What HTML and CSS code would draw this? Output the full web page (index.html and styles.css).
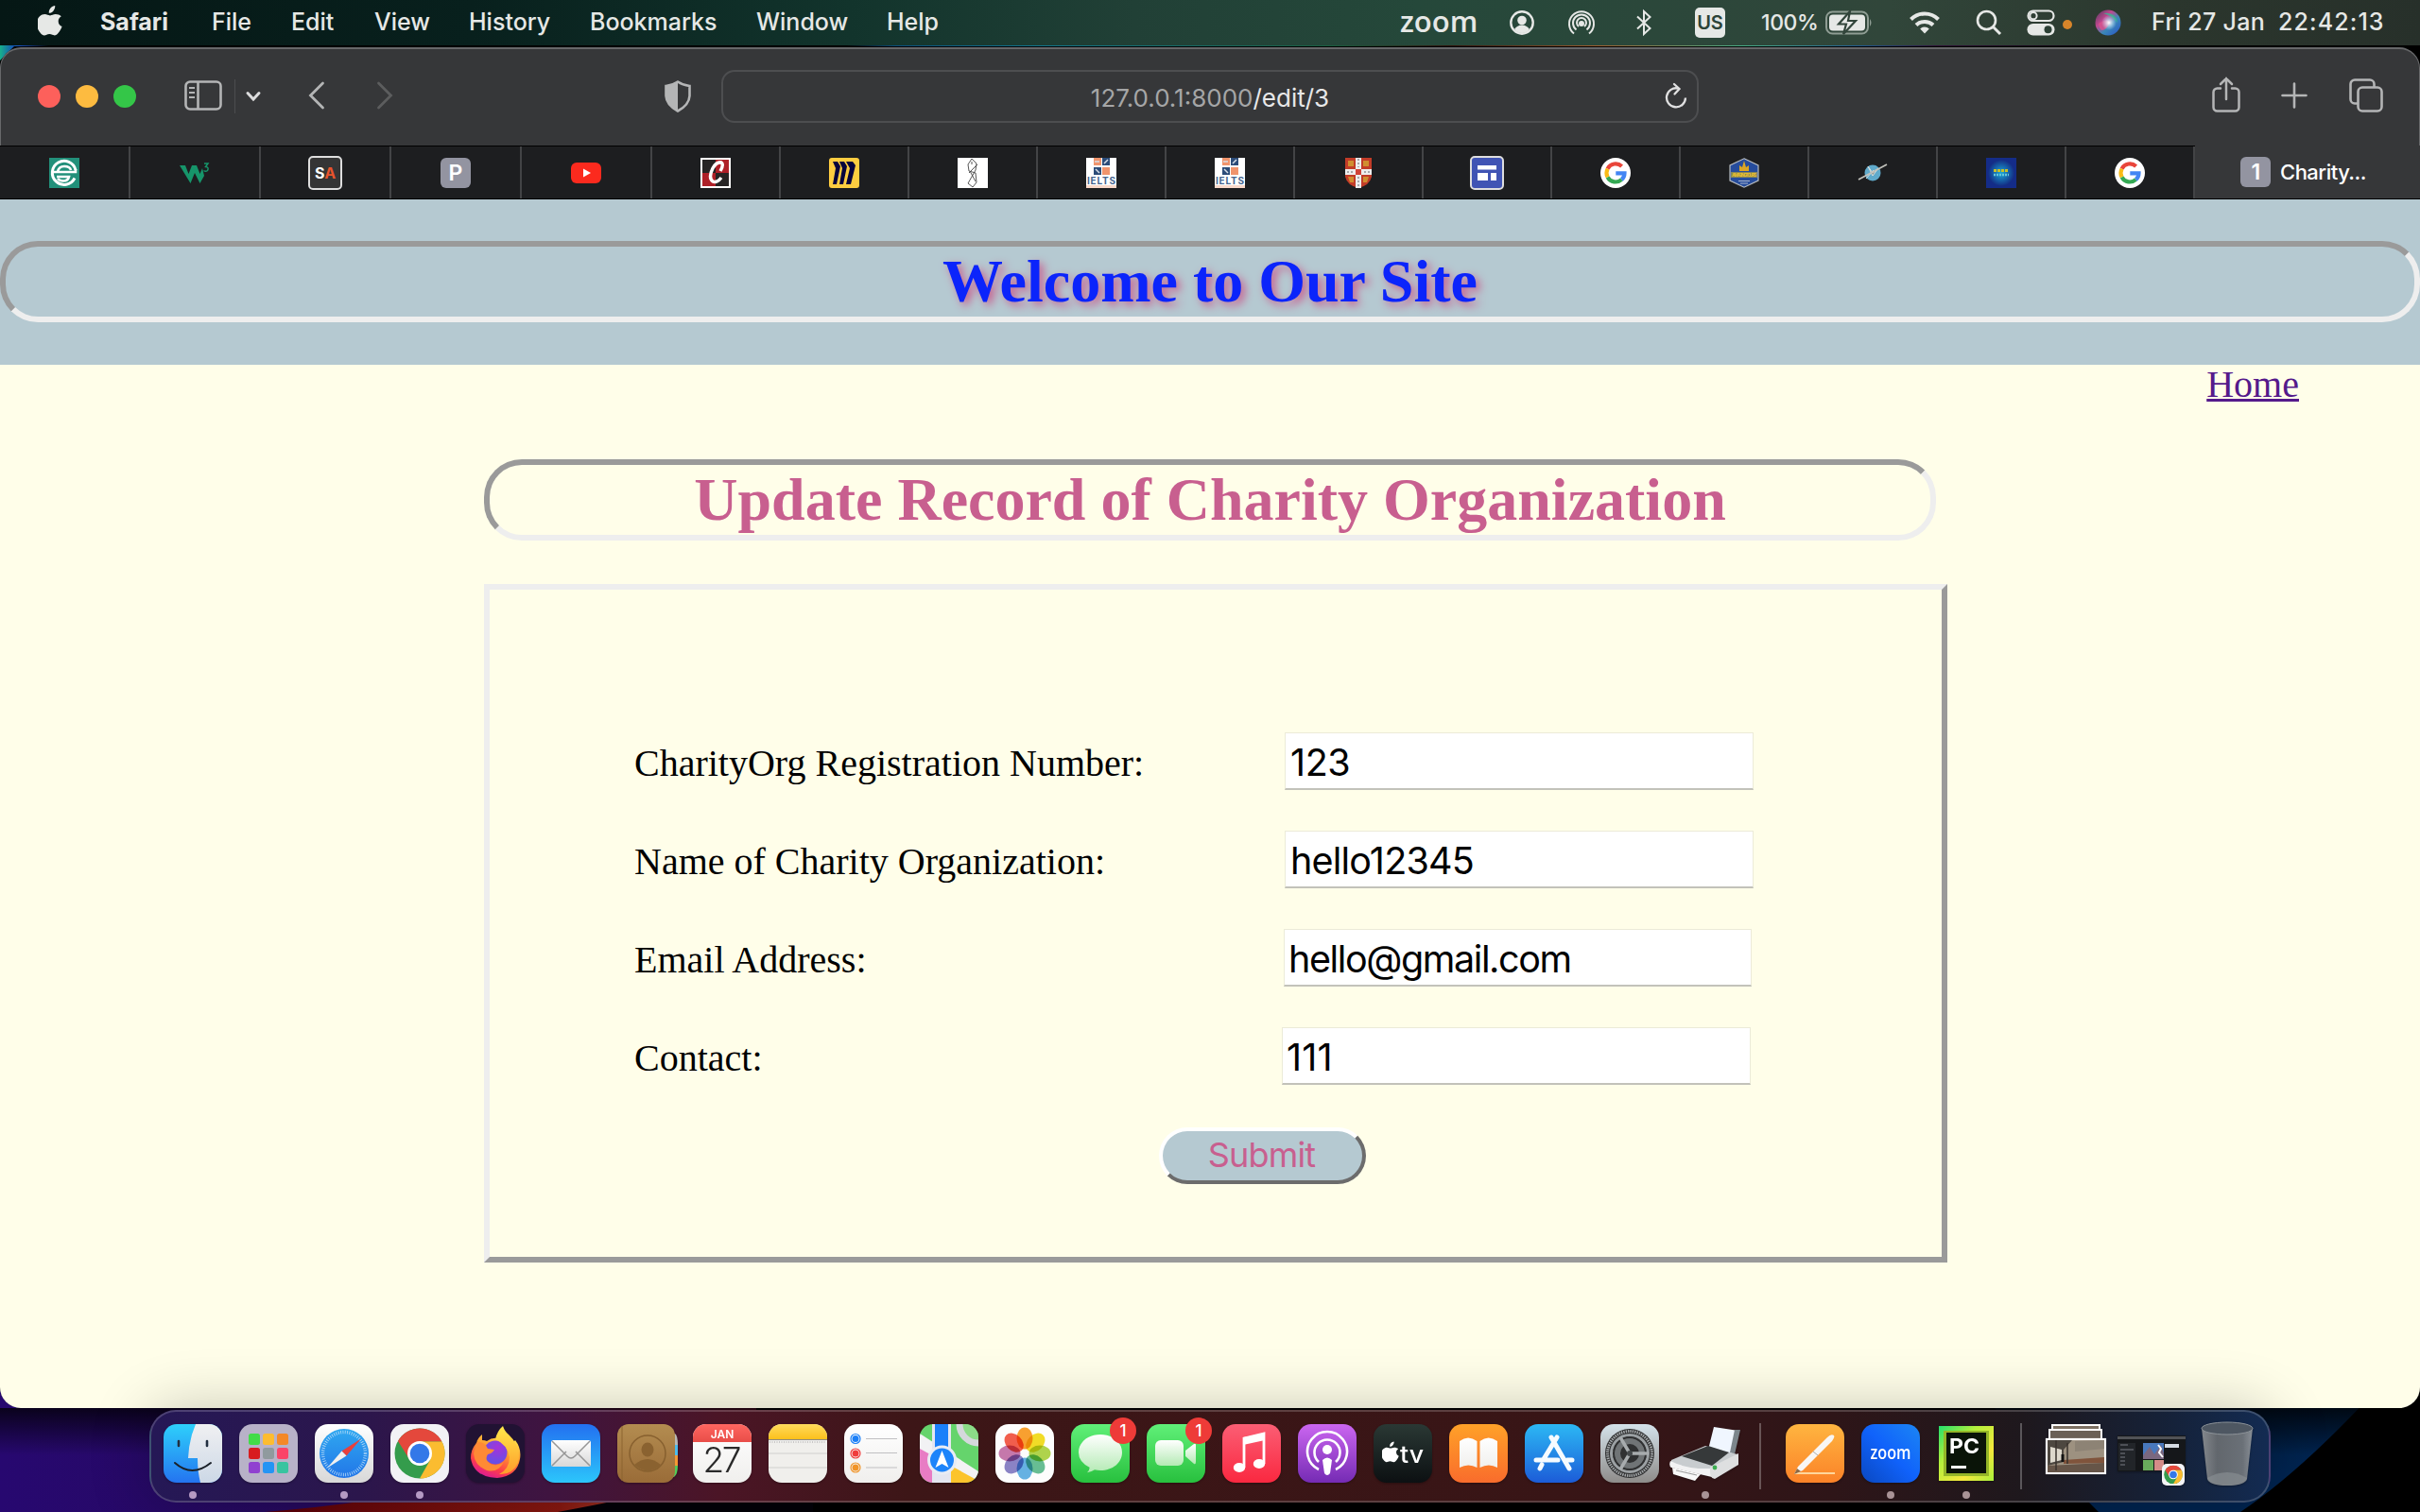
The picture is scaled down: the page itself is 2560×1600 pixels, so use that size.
FILE: index.html
```html
<!DOCTYPE html>
<html lang="en">
<head>
<meta charset="utf-8">
<title>Charity</title>
<link rel="stylesheet" href="styles.css">
</head>
<body>
<svg class="defs" width="0" height="0" aria-hidden="true">
  <defs>
    <linearGradient id="gFinder" x1="0" y1="0" x2="0" y2="1"><stop offset="0" stop-color="#2ed0fb"/><stop offset="1" stop-color="#2474f0"/></linearGradient>
    <linearGradient id="gFace" x1="0" y1="0" x2="0" y2="1"><stop offset="0" stop-color="#f0f0f2"/><stop offset="1" stop-color="#ccd8e6"/></linearGradient>
    <linearGradient id="gWhite" x1="0" y1="0" x2="0" y2="1"><stop offset="0" stop-color="#fff"/><stop offset="1" stop-color="#d8d8d8"/></linearGradient>
    <linearGradient id="gPaper" x1="0" y1="0" x2="0" y2="1"><stop offset="0" stop-color="#fff"/><stop offset="1" stop-color="#f0efed"/></linearGradient>
    <linearGradient id="gBlue" x1="0" y1="0" x2="0" y2="1"><stop offset="0" stop-color="#2fa8f0"/><stop offset="1" stop-color="#2276e8"/></linearGradient>
    <linearGradient id="gMail" x1="0" y1="0" x2="0" y2="1"><stop offset="0" stop-color="#2370f0"/><stop offset="1" stop-color="#2cc6fb"/></linearGradient>
    <linearGradient id="gFox" x1=".8" y1="0" x2=".3" y2="1"><stop offset="0" stop-color="#fff04f"/><stop offset=".4" stop-color="#ff9a2e"/><stop offset=".75" stop-color="#ff3d49"/><stop offset="1" stop-color="#d9189a"/></linearGradient>
    <linearGradient id="gFoxTail" x1="0" y1="0" x2="0" y2="1"><stop offset="0" stop-color="#ffe94a"/><stop offset="1" stop-color="#ff9c2b"/></linearGradient>
    <radialGradient id="gGlobe" cx=".6" cy=".3" r=".8"><stop offset="0" stop-color="#a533d8"/><stop offset="1" stop-color="#5a55e8"/></radialGradient>
    <linearGradient id="gBook" x1="0" y1="0" x2="0" y2="1"><stop offset="0" stop-color="#b38c50"/><stop offset="1" stop-color="#9a6c38"/></linearGradient>
    <linearGradient id="gRed" x1="0" y1="0" x2="0" y2="1"><stop offset="0" stop-color="#ff6660"/><stop offset="1" stop-color="#e84d48"/></linearGradient>
    <linearGradient id="gYellow" x1="0" y1="0" x2="0" y2="1"><stop offset="0" stop-color="#ffdb5c"/><stop offset="1" stop-color="#fcc01c"/></linearGradient>
    <linearGradient id="gGreen" x1="0" y1="0" x2="0" y2="1"><stop offset="0" stop-color="#60f078"/><stop offset="1" stop-color="#28c03e"/></linearGradient>
    <linearGradient id="gBubble" x1="0" y1="0" x2="0" y2="1"><stop offset="0" stop-color="#fff"/><stop offset="1" stop-color="#b4eab4"/></linearGradient>
    <linearGradient id="gMusic" x1="0" y1="0" x2="0" y2="1"><stop offset="0" stop-color="#fb5e74"/><stop offset="1" stop-color="#fa2840"/></linearGradient>
    <linearGradient id="gPod" x1="0" y1="0" x2="0" y2="1"><stop offset="0" stop-color="#cb66f0"/><stop offset="1" stop-color="#752bb4"/></linearGradient>
    <linearGradient id="gTv" x1="0" y1="0" x2="0" y2="1"><stop offset="0" stop-color="#2a3834"/><stop offset="1" stop-color="#0c1012"/></linearGradient>
    <linearGradient id="gOrange" x1="0" y1="0" x2="0" y2="1"><stop offset="0" stop-color="#ffa128"/><stop offset="1" stop-color="#f96c2c"/></linearGradient>
    <linearGradient id="gStore" x1="0" y1="0" x2="0" y2="1"><stop offset="0" stop-color="#2cb8f4"/><stop offset="1" stop-color="#1c5cd8"/></linearGradient>
    <linearGradient id="gPrefs" x1="0" y1="0" x2="0" y2="1"><stop offset="0" stop-color="#d4e2ea"/><stop offset="1" stop-color="#8e8c8a"/></linearGradient>
    <linearGradient id="gPages" x1="0" y1="0" x2="0" y2="1"><stop offset="0" stop-color="#ffb540"/><stop offset="1" stop-color="#fb8228"/></linearGradient>
    <linearGradient id="gZoom" x1="1" y1="0" x2="0" y2="1"><stop offset="0" stop-color="#1c86f4"/><stop offset=".5" stop-color="#1062fb"/><stop offset="1" stop-color="#0a48c0"/></linearGradient>
    <linearGradient id="gPc" x1="0" y1="0" x2="1" y2="1"><stop offset="0" stop-color="#22e06c"/><stop offset=".35" stop-color="#b4f03c"/><stop offset=".7" stop-color="#f4e83c"/><stop offset="1" stop-color="#a8f03c"/></linearGradient>
    <linearGradient id="gTrash" x1="0" y1="0" x2="1" y2="0"><stop offset="0" stop-color="#84888d"/><stop offset=".3" stop-color="#62676d"/><stop offset=".8" stop-color="#6a7077"/><stop offset="1" stop-color="#898f96"/></linearGradient>
    <radialGradient id="gSea"><stop offset="0" stop-color="#18a8d8"/><stop offset="1" stop-color="#142c84"/></radialGradient>
    <linearGradient id="gSiri" x1="0" y1="0" x2="1" y2="1"><stop offset="0" stop-color="#4a3a58"/><stop offset=".35" stop-color="#c04890"/><stop offset=".6" stop-color="#3a88b8"/><stop offset="1" stop-color="#2850c8"/></linearGradient>
    <radialGradient id="gSiriGlow"><stop offset="0" stop-color="#fff"/><stop offset="1" stop-color="#bfe4ff" stop-opacity="0"/></radialGradient>
    <clipPath id="tile"><rect width="62" height="62" rx="14"/></clipPath>
    <symbol id="apple" viewBox="0 0 26 32"><path d="M18.200 0c.3 2.100-.6 4-1.700 5.400-1.200 1.400-3 2.400-4.700 2.300-.3-2 .6-4 1.700-5.200C14.700 1.100 16.600.2 18.200 0zM24.800 11.200c-1.900 1.200-3.100 2.900-3.100 5.200 0 2.700 1.600 4.700 3.900 5.600-.5 1.700-1.400 3.500-2.500 5.100-1.500 2.200-3 4.300-5.300 4.300-2.200 0-2.900-1.300-5.500-1.300s-3.400 1.300-5.500 1.400c-2.300.1-4-2.300-5.500-4.500C-1.700 22.500-2.100 14.700 2 11.300c1.500-1.400 3.500-2.200 5.400-2.200 2.200 0 3.700 1.300 5.600 1.300 1.900 0 3.100-1.300 5.800-1.300 2.200 0 4.500.8 6 2.100z" fill="currentColor"/></symbol>
    <symbol id="google" viewBox="0 0 32 32"><circle cx="16" cy="16" r="16" fill="#fff"/><g fill="none" stroke-width="4.200"><path d="M7.600 11.600A9.500 9.500 0 0 1 22.600 9" stroke="#e9453a"/><path d="M7.600 20.400a9.500 9.500 0 0 1 0-8.800" stroke="#f9bb16"/><path d="M22.400 23A9.500 9.500 0 0 1 7.600 20.400" stroke="#34a853"/><path d="M16.300 16.300h9.200c0 2.800-1.200 5.200-3.100 6.700" stroke="#4285f4"/></g></symbol>
    <symbol id="ielts" viewBox="0 0 32 32"><rect width="32" height="32" fill="#fff"/><rect x="8" y="0" width="8" height="8" fill="#f0946c"/><rect x="17" y="0" width="8" height="8" fill="#2c4c78"/><rect x="8" y="10" width="8" height="8" fill="#2c4c78"/><rect x="17" y="10" width="8" height="8" fill="#f0946c"/><path d="M9 4h5M19 6l4-4M10 12l4 4" stroke="#d8dfe8" stroke-width="1.500"/><text x="16" y="27.500" font-size="10" font-weight="700" textLength="30" text-anchor="middle" fill="#466690">IELTS</text><rect y="29" width="32" height="3" fill="#f9d9ca"/></symbol>
    <symbol id="chrome" viewBox="0 0 54 54"><circle cx="27" cy="27" r="26.500" fill="#349c4c"/><path d="M4 14A26.500 26.500 0 0 1 50.500 14.500L27 14.500l-12 17z" fill="#e4483c"/><path d="M27 14.500h23.500A26.500 26.500 0 0 1 27 53.500l11.300-20z" fill="#fbbc30"/><circle cx="27" cy="27" r="13" fill="#fff"/><circle cx="27" cy="27" r="10.300" fill="#3478e8"/></symbol>
  </defs>
</svg>

<svg class="wallpaper" viewBox="0 0 2560 1600" preserveAspectRatio="none" aria-hidden="true">
  <defs>
    <linearGradient id="wLeft" x1="0" y1="0" x2="1" y2="0"><stop offset="0" stop-color="#270870"/><stop offset=".45" stop-color="#260a5c"/><stop offset=".72" stop-color="#701060"/><stop offset="1" stop-color="#8c1040"/></linearGradient>
    <linearGradient id="wRed" x1="0" y1="0" x2="1" y2="0"><stop offset="0" stop-color="#5a0008"/><stop offset=".6" stop-color="#8a1810"/><stop offset="1" stop-color="#c87858"/></linearGradient>
    <linearGradient id="wTop" x1="0" y1="0" x2="1" y2="0"><stop offset="0" stop-color="#18a880"/><stop offset=".008" stop-color="#1850c0"/><stop offset=".02" stop-color="#000"/><stop offset=".35" stop-color="#000"/><stop offset=".37" stop-color="#085080"/><stop offset=".43" stop-color="#107890"/><stop offset=".55" stop-color="#186040"/><stop offset=".6" stop-color="#301008"/><stop offset=".66" stop-color="#a06030"/><stop offset=".72" stop-color="#48b088"/><stop offset=".77" stop-color="#205890"/><stop offset=".8" stop-color="#301038"/><stop offset=".88" stop-color="#000"/></linearGradient>
    <linearGradient id="wCorner" x1="0" y1="0" x2="1" y2="0"><stop offset="0" stop-color="#18b08c"/><stop offset="1" stop-color="#1448b8"/></linearGradient>
    <linearGradient id="wShade" x1="0" y1="0" x2="0" y2="1"><stop offset="0" stop-color="#000" stop-opacity=".75"/><stop offset="1" stop-color="#000" stop-opacity="0"/></linearGradient>
    <radialGradient id="wBlue" cx="0" cy="0" r="1"><stop offset="0" stop-color="#001028"/><stop offset="1" stop-color="#002450"/></radialGradient>
  </defs>
  <rect width="2560" height="1600" fill="#000"/>
  <rect y="46" width="2560" height="3" fill="url(#wTop)"/>
  <path d="M0 48H16L0 64z" fill="url(#wCorner)"/>
  <path d="M0 1440H800V1600H0z" fill="url(#wLeft)"/>
  <path d="M280 1600Q440 1588 620 1540H800V1600z" fill="url(#wRed)"/>
  <path d="M590 1600Q700 1580 860 1540V1600z" fill="#030208"/>
  <path d="M2100 1480H2505Q2430 1560 2370 1600H2220z" fill="url(#wBlue)"/>
  <rect y="1490" width="2560" height="50" fill="url(#wShade)"/>
</svg>

<header class="menubar">
  <svg class="apple-mark"><use href="#apple"/></svg>
  <nav class="menus"><b>Safari</b><span>File</span><span>Edit</span><span>View</span><span>History</span><span>Bookmarks</span><span>Window</span><span>Help</span></nav>
  <div class="status">
    <span class="zoom-word">zoom</span>
    <svg class="s-user" width="26" height="26" viewBox="0 0 26 26"><circle cx="13" cy="13" r="11.700" fill="none" stroke="#e6e8e6" stroke-width="2.400"/><circle cx="13" cy="10.500" r="4.800" fill="#e6e8e6"/><path d="M5 20q3-4.500 8-4.500t8 4.500q-3 4-8 4t-8-4z" fill="#e6e8e6"/></svg>
    <svg class="s-air" width="30" height="28" viewBox="0 0 30 28" fill="none" stroke="#e6e8e6" stroke-width="2"><path d="M7 25.500A13 13 0 1 1 23 25.500M9.500 21.500A9 9 0 1 1 20.500 21.500M12 18A5 5 0 1 1 18 18"/><circle cx="15" cy="15" r="2" fill="#e6e8e6"/></svg>
    <svg class="s-bt" width="18" height="28" viewBox="0 0 18 28" fill="none" stroke="#e6e8e6" stroke-width="2"><path d="M2 7.500L15.500 20 9 26V2l6.500 6L2 20.500"/></svg>
    <span class="us">US</span>
    <span class="pct">100%</span>
    <svg class="s-batt" width="50" height="26" viewBox="0 0 50 26"><rect x="1" y="1.500" width="44" height="23" rx="6.500" fill="none" stroke="#8f9d94" stroke-width="2"/><rect x="4" y="4.500" width="38" height="17" rx="4" fill="#e6e8e6"/><path d="M47 9q3 4 0 8z" fill="#8f9d94"/><path d="M26 1L14 14.500h8L19 25 32 11h-8z" fill="#e6e8e6" stroke="#32453b" stroke-width="2.200"/></svg>
    <svg class="s-wifi" width="34" height="26" viewBox="0 0 34 26" fill="none" stroke="#e6e8e6" stroke-width="4"><path d="M2.500 9.500a20.500 20.500 0 0 1 29 0M8 15.500a13 13 0 0 1 18 0"/><path d="M17 24.500l-4.800-5a7 7 0 0 1 9.600 0z" fill="#e6e8e6" stroke="none"/></svg>
    <svg class="s-find" width="28" height="28" viewBox="0 0 28 28" fill="none" stroke="#e6e8e6" stroke-width="2.600"><circle cx="11.500" cy="11.500" r="9.500"/><path d="M18.500 18.500l7.500 7.500" stroke-width="3"/></svg>
    <svg class="s-cc" width="30" height="28" viewBox="0 0 30 28"><rect x="1.500" y="1.500" width="27" height="10.500" rx="5.200" fill="none" stroke="#e6e8e6" stroke-width="2.200"/><circle cx="7" cy="6.700" r="3.600" fill="none" stroke="#e6e8e6" stroke-width="2"/><rect x=".5" y="15" width="29" height="12.500" rx="6.200" fill="#e6e8e6"/><circle cx="22.500" cy="21.200" r="4" fill="#2c4035"/></svg>
    <i class="mic"></i>
    <svg class="s-siri" width="28" height="28" viewBox="0 0 28 28"><circle cx="14" cy="14" r="13.500" fill="url(#gSiri)"/><path d="M9 4Q22 2 24 14 17 6 9 4z" fill="#38b890" opacity=".8"/><path d="M4 15q8-6 12-2-3 9-9 9-3-3-3-7z" fill="#e0508c" opacity=".8"/><circle cx="15" cy="14" r="8" fill="url(#gSiriGlow)"/></svg>
    <span class="date">Fri 27 Jan</span><span class="time">22:42:13</span>
  </div>
</header>

<section class="window">
  <div class="toolbar">
    <div class="lights"><i class="red"></i><i class="amber"></i><i class="green"></i></div>
    <svg class="t-side" width="40" height="32" viewBox="0 0 40 32" fill="none" stroke="#b4b5b6" stroke-width="2.600"><rect x="1.500" y="1.500" width="37" height="29" rx="4.500"/><path d="M14.500 1.500v29"/><path d="M5 8h6M5 13h6M5 18h6" stroke-width="2"/></svg>
    <i class="rule"></i>
    <svg class="t-down" width="16" height="12" viewBox="0 0 16 12" fill="none" stroke="#dcdcdd" stroke-width="3" stroke-linecap="round"><path d="M2 2.500l6 6.500 6-6.500"/></svg>
    <svg class="t-back" width="18" height="30" viewBox="0 0 18 30" fill="none" stroke="#b4b5b6" stroke-width="2.800" stroke-linecap="round"><path d="M15.500 2L2.500 15l13 13"/></svg>
    <svg class="t-fwd" width="18" height="30" viewBox="0 0 18 30" fill="none" stroke="#5c5d5e" stroke-width="2.800" stroke-linecap="round"><path d="M2.500 2l13 13-13 13"/></svg>
    <svg class="t-shield" width="28" height="34" viewBox="0 0 28 34"><path d="M14 1.500q5 3.500 12.500 4.500v10.500Q26 26 14 32.500 2 26 1.500 16.500V6Q9 5 14 1.500z" fill="none" stroke="#b4b5b6" stroke-width="2.600"/><path d="M14 1.500v31Q2 26 1.500 16.500V6Q9 5 14 1.500z" fill="#b4b5b6"/></svg>
    <div class="address"><span class="url"><span class="dim">127.0.0.1:8000</span>/edit/3</span>
      <svg class="reload" width="24" height="28" viewBox="0 0 24 28" fill="none" stroke="#e0e0e1" stroke-width="2.300"><path d="M14.500 5.600A10 10 0 1 0 22 15.500"/><path d="M10 1l5.500 5-5 5.500" stroke-linecap="round"/></svg></div>
    <svg class="t-share" width="30" height="38" viewBox="0 0 30 38" fill="none" stroke="#b4b5b6" stroke-width="2.500" stroke-linecap="round"><path d="M9 12.500H5.500a4 4 0 0 0-4 4v16a4 4 0 0 0 4 4h19a4 4 0 0 0 4-4v-16a4 4 0 0 0-4-4H21M15 24V2M9 8l6-6 6 6"/></svg>
    <svg class="t-plus" width="28" height="28" viewBox="0 0 28 28" stroke="#b4b5b6" stroke-width="2.600" stroke-linecap="round"><path d="M14 1.500v25M1.500 14h25"/></svg>
    <svg class="t-tabs" width="36" height="36" viewBox="0 0 36 36" fill="none" stroke="#b4b5b6" stroke-width="2.600"><rect x="9.500" y="9.500" width="25" height="25" rx="4.500"/><path d="M9.500 26.500H6a4.500 4.500 0 0 1-4.500-4.500V6A4.500 4.500 0 0 1 6 1.500h16A4.500 4.500 0 0 1 26.500 6v3.500"/></svg>
  </div>

  <div class="tabs">
    <span class="tab"><svg viewBox="0 0 32 32"><rect width="32" height="32" fill="#22907a"/><path d="M28 13A12.500 12.500 0 1 0 27 21.500" fill="none" stroke="#fff" stroke-width="3"/><path d="M3.500 15H28v-3M9 15q1-6 7-6t7 4" fill="none" stroke="#fff" stroke-width="2.600"/><path d="M8 20h13q-1 4.500-6 4.500-4 0-6-2.500" fill="none" stroke="#fff" stroke-width="2.600"/></svg></span>
    <span class="tab"><svg viewBox="0 0 32 32"><path d="M0 8h6l3.500 9L13 8h5l3.500 9L24 11l2 8-4.500 8L16 16l-4.500 11z" fill="#16956a"/><path d="M26 6h4l-2.500 3.500q4 .5 2 4-2 1.500-4 0" fill="none" stroke="#16956a" stroke-width="1.500"/></svg></span>
    <span class="tab"><svg class="big" viewBox="0 0 36 36"><rect x="1" y="1" width="34" height="34" rx="4" fill="#353535" stroke="#dedede" stroke-width="2"/><text x="7" y="24" font-size="16" font-weight="700" fill="#fff">S<tspan fill="#e8542c">A</tspan></text></svg></span>
    <span class="tab"><i class="letter">P</i></span>
    <span class="tab"><svg viewBox="0 0 32 32"><rect y="5" width="32" height="22" rx="6" fill="#fb2a1e"/><path d="M13 11.500l8 4.500-8 4.500z" fill="#fff"/></svg></span>
    <span class="tab"><svg viewBox="0 0 32 32"><rect width="32" height="32" fill="#fff"/><path d="M2 2h14v14H2zM16 16h14v14H16z" fill="#262424"/><path d="M16 2h14v14H16zM2 16h14v14H2z" fill="#ae2028"/><path d="M21 14q4-7 1-9-5-1-9 6-5 10 0 14 4 2 9-4" fill="none" stroke="#fff" stroke-width="3.500"/></svg></span>
    <span class="tab"><svg viewBox="0 0 32 32"><rect width="32" height="32" rx="3" fill="#fecd40"/><path d="M4 4h5l3 5-4 19H4l3-17zM11 4h5l3 5-4 19h-4l3-17zM18 4h7l3 4-5 20h-5l4-17z" fill="#08043c"/></svg></span>
    <span class="tab"><svg viewBox="0 0 32 32"><rect width="32" height="32" fill="#fff"/><path d="M15 1l5 5-1 7-8 14 5 4 4-5-1-10-7-2-1-7zM21 7L12 16M13 14l6 11M15 4v3" fill="none" stroke="#444" stroke-width=".9"/></svg></span>
    <span class="tab"><svg><use href="#ielts"/></svg></span>
    <span class="tab"><svg><use href="#ielts"/></svg></span>
    <span class="tab"><svg viewBox="0 0 32 32"><path d="M2 0h28v20q-2 9-14 12Q4 29 2 20z" fill="#c23c28"/><path d="M5 3h6v6H5zM21 3h6v6h-6zM5 20h6v6H7zM21 20h6l-2 6h-4z" fill="#d08e30"/><path d="M13 0h6v32h-6z" fill="#eee"/><path d="M2 12h28v6H2z" fill="#eee"/><path d="M16 1v9M16 20v11M4 15h6M22 15h6" stroke="#a8a8ac" stroke-width="2" stroke-dasharray="2 2"/><rect x="13" y="12" width="6" height="6" fill="#d04438"/></svg></span>
    <span class="tab"><svg class="big" viewBox="0 0 36 36"><rect x="1" y="1" width="34" height="34" rx="4" fill="#4054b4" stroke="#dedede" stroke-width="2"/><path d="M8 10h20v4.500H8zM8 18h11v8H8zM22 18h6v8h-6z" fill="#fff"/></svg></span>
    <span class="tab"><svg><use href="#google"/></svg></span>
    <span class="tab"><svg viewBox="0 0 32 32"><path d="M16 .8L31 8v16L16 31.200 1 24V8z" fill="#264c9c" stroke="#b8bcc0" stroke-width="1.200"/><path d="M11 14l0-6 3 2 2-7 2 7 3-2 0 6z" fill="#dca624"/><path d="M2 15h28v6H2z" fill="#87865a"/><text x="16" y="20" font-size="5" text-anchor="middle" font-weight="700" fill="#e8c02c" textLength="26">AMAZING TOURS</text><path d="M10 24.500h12M12 27h8" stroke="#a8b4cc"/></svg></span>
    <span class="tab"><svg viewBox="0 0 32 32"><circle cx="16" cy="16" r="8.500" fill="#60aacb"/><path d="M11 9l5 7 6-5-6 8zM9 22l8-9" fill="#8a918c" stroke="#d8e0e0"/><path d="M1 23L31 7" stroke="#c2c2bc" stroke-width="1.600"/></svg></span>
    <span class="tab"><svg viewBox="0 0 32 32"><rect width="32" height="32" fill="#142c88"/><circle cx="16" cy="16" r="14" fill="url(#gSea)"/><path d="M8 13.500h16" stroke="#c8c028" stroke-width="3" stroke-dasharray="3 1"/><path d="M8 18h16" stroke="#64c8dc" stroke-width="2.500" stroke-dasharray="2 1"/></svg></span>
    <span class="tab"><svg><use href="#google"/></svg></span>
    <span class="tab active"><i class="letter">1</i><span>Charity...</span></span>
  </div>

  <main class="page">
    <div class="banner"><h1>Welcome to Our Site</h1></div>
    <div class="links"><a href="#">Home</a></div>
    <h2>Update Record of Charity Organization</h2>
    <form>
      <label><span>CharityOrg Registration Number:</span><input type="text" value="123"></label>
      <label class="name"><span>Name of Charity Organization:</span><input type="text" value="hello12345"></label>
      <label class="email"><span>Email Address:</span><input type="text" value="hello@gmail.com"></label>
      <label class="contact"><span>Contact:</span><input type="text" value="111"></label>
      <button type="button">Submit</button>
    </form>
  </main>
</section>

<footer class="dock">
  <div class="app run"><svg viewBox="0 0 62 62"><g clip-path="url(#tile)"><rect width="62" height="62" fill="url(#gFinder)"/><path d="M34 0Q27 16 26 36h10q0 14 3 26h23V0z" fill="url(#gFace)"/></g><path d="M16 18v5M46 18v5" stroke="#222f40" stroke-width="2.600" stroke-linecap="round"/><path d="M12 41q18 16 38 0" fill="none" stroke="#1a2028" stroke-width="2" stroke-linecap="round"/></svg></div>
  <div class="app"><svg viewBox="0 0 62 62"><rect width="62" height="62" rx="14" fill="#b8b2c8"/><g><rect x="10" y="10" width="12" height="12" rx="2.500" fill="#42dc48"/><rect x="25" y="10" width="12" height="12" rx="2.500" fill="#fdbc30"/><rect x="40" y="10" width="12" height="12" rx="2.500" fill="#f48828"/><rect x="10" y="25" width="12" height="12" rx="2.500" fill="#d81c20"/><rect x="25" y="25" width="12" height="12" rx="2.500" fill="#909a9e"/><rect x="40" y="25" width="12" height="12" rx="2.500" fill="#fb4468"/><rect x="10" y="40" width="12" height="12" rx="2.500" fill="#9040d0"/><rect x="25" y="40" width="12" height="12" rx="2.500" fill="#2494f4"/><rect x="40" y="40" width="12" height="12" rx="2.500" fill="#38c4a0"/></g></svg></div>
  <div class="app run"><svg viewBox="0 0 62 62"><rect width="62" height="62" rx="14" fill="url(#gWhite)"/><circle cx="31" cy="31" r="26" fill="url(#gBlue)"/><circle cx="31" cy="31" r="22.500" fill="none" stroke="#b8dcf8" stroke-width="3.500" stroke-dasharray=".8 1.560"/><path d="M49 15.500L33.500 33.500l-5-5z" fill="#e8403c"/><path d="M13 46.500l15.500-18 5 5z" fill="#f0f0f0"/></svg></div>
  <div class="app run"><svg viewBox="0 0 62 62"><rect width="62" height="62" rx="14" fill="#f2f2f5"/><use href="#chrome" x="4" y="4" width="54" height="54"/></svg></div>
  <div class="app"><svg viewBox="0 0 62 62"><rect width="62" height="62" rx="14" fill="#211233"/><path d="M11 20q1-5 6-9v6q3 0 5 1 8-6 17-1 5 3 6 8l7-8q7 9 5 20-3 18-24 20Q8 56 5 36 5 27 11 20z" fill="url(#gFox)"/><circle cx="31" cy="30" r="12.500" fill="url(#gGlobe)"/><path d="M31 16Q33 7 39 2q2 6 6 9 14 13 10 30-6 13-20 12 11-6 11-18-2-13-15-19z" fill="url(#gFoxTail)"/><path d="M11 20q8-3 12 6l7 1q-2 4-7 5-4 6 3 10 7 3 14-2-6 12-18 9Q9 44 8 31z" fill="#ff8a35"/></svg></div>
  <div class="app"><svg viewBox="0 0 62 62"><rect width="62" height="62" rx="14" fill="url(#gMail)"/><rect x="10" y="17" width="42" height="28" rx="2.500" fill="url(#gWhite)"/><path d="M11 44l15-15M51 44L36 29M11 18l16 16q4 4 8 0l16-16" fill="none" stroke="#969696" stroke-width="1.500"/></svg></div>
  <div class="app"><svg viewBox="0 0 62 62"><path d="M56 10h5q3 2 3 12h-8z" fill="#b8b8b4"/><path d="M56 22h8v11h-8z" fill="#4cbcec"/><path d="M56 33h8v11h-8z" fill="#f49834"/><path d="M56 44h8q0 9-4 12h-4z" fill="#52cc58"/><rect width="61" height="62" rx="12" fill="url(#gBook)"/><path d="M5 2v58" stroke="#8c6430" stroke-width="1"/><circle cx="32" cy="31" r="19" fill="none" stroke="#87602f" stroke-width="1.500"/><ellipse cx="32" cy="27" rx="6.500" ry="7.500" fill="#8a6230"/><path d="M18 43q14-12 28 0-13 13-28 0z" fill="#8a6230"/></svg></div>
  <div class="app"><svg viewBox="0 0 62 62"><g clip-path="url(#tile)"><rect width="62" height="62" fill="url(#gPaper)"/><rect width="62" height="19" fill="url(#gRed)"/></g><text x="31" y="14.500" font-size="12" font-weight="600" text-anchor="middle" fill="#fff">JAN</text><text x="31" y="51" font-size="37" font-weight="300" text-anchor="middle" fill="#2a2a2a" textLength="41">27</text></svg></div>
  <div class="app"><svg viewBox="0 0 62 62"><g clip-path="url(#tile)"><rect width="62" height="62" fill="#f0efec"/><rect width="62" height="16" fill="url(#gYellow)"/><path d="M0 16.500h62" stroke="#8e8a80"/><path d="M1 19h60" stroke="#bbb" stroke-width="1.500" stroke-dasharray="1 1.500"/><path d="M0 31h62M0 46h62" stroke="#d0d0ce"/></g></svg></div>
  <div class="app"><svg viewBox="0 0 62 62"><rect width="62" height="62" rx="14" fill="url(#gPaper)"/><g fill="none" stroke-width="1.200"><circle cx="12" cy="15.500" r="5" stroke="#1c80f8"/><circle cx="12" cy="31" r="5" stroke="#f03c3c"/><circle cx="12" cy="46" r="5" stroke="#f09428"/></g><circle cx="12" cy="15.500" r="3.500" fill="#1c80f8"/><circle cx="12" cy="31" r="3.500" fill="#f03c3c"/><circle cx="12" cy="46" r="3.500" fill="#f09428"/><path d="M23 15.500h33M23 30.500h33M23 46h33" stroke="#c0c0c2"/></svg></div>
  <div class="app"><svg viewBox="0 0 62 62"><g clip-path="url(#tile)"><rect width="62" height="62" fill="#65d46c"/><path d="M0 22l14 10v30H0z" fill="#e87cc4"/><path d="M32 42l30 18v2H32z" fill="#fcc42c"/><path d="M0 10l62 40v10L0 26z" fill="#f2f2f4"/><path d="M13 0h20v62H13z" fill="#e4e6f0"/><path d="M16 0h14v38H16z" fill="#1a80fa"/><circle cx="62" cy="0" r="20" fill="#8cdc88" stroke="#d4d8dc" stroke-width="7"/></g><circle cx="23.500" cy="38" r="14" fill="#1c84fa" stroke="#e8ecf4" stroke-width="3"/><path d="M23.500 28l7 18-7-4-7 4z" fill="#fff"/></svg></div>
  <div class="app"><svg viewBox="0 0 62 62"><rect width="62" height="62" rx="14" fill="#fdfdfd"/><g class="petals" transform="translate(31 31)"><ellipse cy="-16" rx="8.500" ry="11.500" fill="#f8981e"/><ellipse cy="-16" rx="8.500" ry="11.500" transform="rotate(45)" fill="#f0d914"/><ellipse cy="-16" rx="8.500" ry="11.500" transform="rotate(90)" fill="#a8cf3c"/><ellipse cy="-16" rx="8.500" ry="11.500" transform="rotate(135)" fill="#5ab88a"/><ellipse cy="-16" rx="8.500" ry="11.500" transform="rotate(180)" fill="#58aae0"/><ellipse cy="-16" rx="8.500" ry="11.500" transform="rotate(225)" fill="#8078c0"/><ellipse cy="-16" rx="8.500" ry="11.500" transform="rotate(270)" fill="#c06ca4"/><ellipse cy="-16" rx="8.500" ry="11.500" transform="rotate(315)" fill="#f0503c"/></g></svg></div>
  <div class="app"><svg viewBox="0 0 62 62"><rect width="62" height="62" rx="14" fill="url(#gGreen)"/><path d="M31 11c13 0 23 8 23 19s-10 19-23 19q-3 0-6-.8-3 2-8 3 3-3 2.500-5.500Q8 40 8 30c0-11 10-19 23-19z" fill="url(#gBubble)"/></svg><b class="badge">1</b></div>
  <div class="app"><svg viewBox="0 0 62 62"><rect width="62" height="62" rx="14" fill="url(#gGreen)"/><rect x="9" y="17" width="30" height="27" rx="6" fill="url(#gBubble)"/><path d="M41 28l9-7q2-1 2 1v18q0 3-2 2l-9-8z" fill="url(#gBubble)"/></svg><b class="badge">1</b></div>
  <div class="app"><svg viewBox="0 0 62 62"><rect width="62" height="62" rx="14" fill="url(#gMusic)"/><path d="M23 46V15l21-5v32" fill="none" stroke="#fff" stroke-width="2.800"/><path d="M22 14l23-4v7l-23 5z" fill="#fff"/><ellipse cx="18" cy="46" rx="6.200" ry="5" fill="#fff"/><ellipse cx="39" cy="42" rx="6.200" ry="5" fill="#fff"/></svg></div>
  <div class="app"><svg viewBox="0 0 62 62"><rect width="62" height="62" rx="14" fill="url(#gPod)"/><g fill="none" stroke="#fff" stroke-width="2.600"><path d="M22 48a21 21 0 1 1 18 0"/><path d="M22 40a13.500 13.500 0 1 1 18 0"/></g><circle cx="31" cy="27" r="5" fill="#fff"/><path d="M26 38q5-5 10 0l-2 14q-3 4-6 0z" fill="#fff"/></svg></div>
  <div class="app"><svg viewBox="0 0 62 62"><rect width="62" height="62" rx="14" fill="url(#gTv)"/><use href="#apple" x="9" y="18" width="18" height="23" color="#fff"/><text x="28" y="41" font-size="25" font-weight="500" fill="#fff" textLength="25" lengthAdjust="spacingAndGlyphs">tv</text></svg></div>
  <div class="app"><svg viewBox="0 0 62 62"><rect width="62" height="62" rx="14" fill="url(#gOrange)"/><path d="M11 18q9-7 18.500 0v28q-9-5-18.500 0zM32.500 18q9-7 18.500 0v28q-9-5-18.500 0z" fill="url(#gPaper)"/></svg></div>
  <div class="app"><svg viewBox="0 0 62 62"><rect width="62" height="62" rx="14" fill="url(#gStore)"/><g stroke="#f6fbff" stroke-width="5" stroke-linecap="round"><path d="M34 14L20 37M28 14l19 33M12 38h23M45 38h5M18 43l-2 4"/></g></svg></div>
  <div class="app"><svg viewBox="0 0 62 62"><rect width="62" height="62" rx="14" fill="url(#gPrefs)"/><circle cx="31" cy="31" r="26" fill="#303132"/><g fill="none"><circle cx="31" cy="31" r="23.500" stroke="#a4a8aa" stroke-width="3" stroke-dasharray="1.400 1"/><circle cx="31" cy="31" r="19.500" stroke="#9ba0a3" stroke-width="3"/><circle cx="31" cy="31" r="13" stroke="#707476" stroke-width="6"/><circle cx="31" cy="31" r="17" stroke="#303132" stroke-width="1.500" stroke-dasharray="2 2"/><path d="M31 31h20M31 31L21 14M31 31L21 48" stroke="#a8acae" stroke-width="3.500"/></g><circle cx="31" cy="31" r="3" fill="#44484a"/></svg></div>
  <div class="app run"><svg viewBox="0 0 62 62"><path d="M34 27l6-24 26 4-6 26z" fill="#f0f6ff"/><path d="M62 6l6 0-6 26-5-2z" fill="#7c868c"/><path d="M-5 38l36-15 34 9-23 24-47-14z" fill="#c8cccf"/><path d="M6 34l28-11 22 7-18 14z" fill="#36393a"/><path d="M-6 39q17 9 44 8v9L-5 46q-3-2-1-7z" fill="#f2f2f3"/><path d="M36 46l30-15v12L41 58q-6 0-5-12z" fill="#dedfe0"/><path d="M-4 46l30 7-6 7-23-7z" fill="#f8f8f8"/><path d="M0 49l22 5" stroke="#999"/><circle cx="41" cy="46" r="2.400" fill="#3cac50"/></svg></div>
  <i class="divider"></i>
  <div class="app"><svg viewBox="0 0 62 62"><rect width="62" height="62" rx="14" fill="url(#gPages)"/><path d="M10 52h42" stroke="#ffd69c" stroke-width="2"/><path d="M9 53l4-8L44 14q4-4 7-2 1 2-2 6L18 49z" fill="#f8f6f4"/><path d="M9 53l3-6 4 3z" fill="#8c6844"/><path d="M29 29l5 4" stroke="#aaa"/></svg></div>
  <div class="app run"><svg viewBox="0 0 62 62"><rect width="62" height="62" rx="14" fill="url(#gZoom)"/><text class="zoom-logo" x="31" y="36.500" font-size="20" text-anchor="middle" fill="#fff" textLength="43" lengthAdjust="spacingAndGlyphs">zoom</text></svg></div>
  <div class="app run"><svg viewBox="0 0 62 62"><rect x="2" y="2" width="58" height="58" fill="url(#gPc)"/><rect x="7" y="7" width="48" height="48" fill="#93b628"/><rect x="10" y="9" width="42" height="43" fill="#0a1408"/><text x="13" y="31" font-size="22" font-weight="700" fill="#fff" textLength="32" lengthAdjust="spacingAndGlyphs">PC</text><path d="M15 45.500h16" stroke="#fff" stroke-width="3"/></svg></div>
  <i class="divider"></i>
  <div class="app"><svg viewBox="0 0 62 62"><rect x="6" y="1" width="50" height="8" fill="#7d7062" stroke="#fff" stroke-width="2"/><rect x="3" y="6" width="55" height="12" fill="#6b6056" stroke="#fff" stroke-width="2"/><rect x="0" y="16" width="62" height="36" fill="#9d9180" stroke="#fff" stroke-width="2.200"/><path d="M1 17h26l-9 10v13l-17 4z" fill="#4d4740"/><path d="M4 24l12 3v11l-12 3z" fill="#ddd8cc"/><path d="M30 18l31-1v9l-31 3z" fill="#8d8375"/><path d="M18 38l43-3v6l-43 1z" fill="#80543c"/><path d="M1 44l60-3v10H1z" fill="#665548"/><path d="M10 17v32M22 20v22" stroke="#38322c" stroke-width="1.500"/><path d="M17 32v8" stroke="#111" stroke-width="3"/></svg></div>
  <div class="app"><svg viewBox="0 0 62 62"><rect x="-5" y="12" width="72" height="38" fill="#15171a"/><path d="M-5 14.500h72" stroke="#505256" stroke-width="3"/><path d="M-4 20h18v29H-4z" fill="#222529"/><path d="M-2 22h8M-2 27h14M-2 31h5M-2 35h5M-2 39h5M-2 43h5" stroke="#797d84"/><rect x="22" y="20" width="22" height="17" fill="#4878bc"/><path d="M22 33l7-9 5 8 7-10 3 9v6H22z" fill="#7a6880"/><path d="M22 38h11v11H22z" fill="#69ac5c"/><path d="M34 38h10v11H34z" fill="#d58c88"/><path d="M45 21h15v4H45z" fill="#d6dce4"/><path d="M38 22l3 4-2 4 4 5" fill="none" stroke="#fff" stroke-width="2"/><rect x="42" y="42" width="24" height="23" rx="5" fill="#f4f4f6"/><use href="#chrome" x="44" y="43.500" width="20" height="20"/></svg></div>
  <div class="app"><svg viewBox="0 0 62 62"><path d="M4 4l6 54q2 7 21 7t21-7l6-54z" fill="url(#gTrash)"/><path d="M10 57q10-6 21-6t21 6q-3 8-21 8t-21-8z" fill="#888d92" opacity=".7"/><ellipse cx="31" cy="4.500" rx="27" ry="6.500" fill="#4e5762" stroke="#8c9298"/></svg></div>
</footer>
</body>
</html>
```
FILE: styles.css
```css
* { box-sizing: border-box; }
html, body { margin: 0; }
body {
  position: relative;
  width: 2560px;
  height: 1600px;
  overflow: hidden;
  display: flex;
  flex-direction: column;
  background: #000;
  font-family: Inter, "Liberation Sans", sans-serif;
}
svg { display: block; flex: none; overflow: visible; }
i { font-style: normal; }
.defs { position: absolute; }
.wallpaper { position: absolute; inset: 0; width: 2560px; height: 1600px; z-index: -1; }

/* Menu bar */
.menubar {
  height: 48px;
  flex: none;
  display: flex;
  align-items: center;
  color: #e6e8e6;
  font-size: 25px;
  background: linear-gradient(90deg, #051715 0, #08201d 500px, #12342c 900px, #214036 1200px, #25483a 1500px, #31463a 2000px, #2b362d 2300px, #27302a 2560px);
}
.apple-mark { width: 26px; height: 32px; margin: -4px 40px 0 40px; }
.menus {
  display: grid;
  grid-template-columns: 118px 84px 88px 100px 128px 176px 138px 81px;
  line-height: 46px;
  margin-top: -2px;
  font-weight: 500;
}
.menus b { font-weight: 700; }
.status { flex: 1; display: flex; align-items: center; margin-left: 462px; font-weight: 500; white-space: nowrap; }
.zoom-word { width: 116px; margin-top: -5px; font: 600 31px/46px "Open Sans", sans-serif; }
.s-user { margin-right: 35px; }
.s-air { margin-right: 42px; }
.s-bt { margin-right: 45px; }
.us { width: 32px; height: 32px; margin-right: 38px; border-radius: 5px; background: #e6e8e6; color: #2c4338; font: 600 20px/33px Inter, sans-serif; text-align: center; }
.pct { width: 68px; font-size: 23px; letter-spacing: -0.4px; }
.s-batt { margin-right: 38px; }
.s-wifi { margin-right: 37px; }
.s-find { margin-right: 26px; }
.s-cc { margin-right: 8px; }
.mic { width: 10px; height: 10px; margin: 4px 24px 0 0; border-radius: 50%; background: #d8852a; }
.s-siri { margin-right: 32px; }
.date { width: 134px; margin-top: -2px; letter-spacing: 0.3px; }
.time { margin-top: -2px; letter-spacing: 1.1px; }

/* Browser window */
.window {
  flex: none;
  height: 1440px;
  margin-top: 2px;
  border-radius: 22px;
  overflow: hidden;
  background: #363739;
}
.toolbar {
  height: 104px;
  display: flex;
  align-items: center;
  padding: 0 36px 2px 39px;
  border: 2px solid #67686a;
  border-width: 2px 1px 0;
  border-radius: 22px 22px 0 0;
}
.toolbar > * { flex: none; }
.lights { display: flex; gap: 16px; margin-right: 51px; }
.lights i { width: 24px; height: 24px; border-radius: 50%; }
.red { background: #fd605b; }
.amber { background: #fdbb40; }
.green { background: #34c648; }
.t-side { margin: -2px 13px 0 0; }
.rule { width: 1px; height: 36px; background: #4c4d4f; margin-right: 11px; }
.t-down { margin-right: 50px; }
.t-back { margin: -2px 54px 0 0; }
.t-fwd { margin: -2px 287px 0 0; }
.t-shield { margin-right: 32px; }
.address {
  width: 1034px;
  height: 56px;
  border: 2px solid #4d4e50;
  border-radius: 14px;
  display: grid;
  grid-template-columns: 1fr auto;
  align-items: center;
  padding: 0 10px 0 34px;
  font-size: 26px;
  color: #e8e8e9;
  text-align: center;
}
.dim { color: #a5a6a7; }
.url { padding-top: 3px; }
.t-share { margin: -5px 43px 0 543px; }
.t-plus { margin: -2px 44px 0 0; }
.t-tabs { margin-top: -2px; }

.tabs {
  height: 57px;
  display: grid;
  grid-template-columns: repeat(5, 138px) repeat(12, 136px) 238px;
  border-top: 1px solid #000;
  border-bottom: 1px solid #000;
}
.tab { display: flex; align-items: center; justify-content: center; background: #1d1e20; border-right: 2px solid #434446; }
.tab svg { width: 32px; height: 32px; }
.tab svg.big { width: 36px; height: 36px; }
.letter { width: 32px; height: 32px; border-radius: 6px; background: #9394a1; color: #fff; font-size: 23px; font-weight: 600; line-height: 33px; text-align: center; }
.tab.active { background: #363739; margin-top: -1px; border: 0; justify-content: flex-start; gap: 10px; padding-left: 48px; color: #fff; font-size: 22px; font-weight: 500; letter-spacing: -0.5px; }

/* Web page */
.page { height: 1279px; background: #fffee9; font-family: "Liberation Serif", serif; }
.banner { height: 175px; padding-top: 44px; background: #b5c9d1; }
h1, h2 {
  margin: 0;
  height: 86px;
  border: 6px solid;
  border-color: #9a9a9a #eee #eee #9a9a9a;
  border-radius: 40px;
  font-size: 64px;
  line-height: 74px;
  text-align: center;
}
h1 { color: #0b24fb; text-shadow: 4px 4px 10px #c85f8f; }
h2 { width: 1536px; margin: 54px 0 46px 512px; color: #c85f8f; }
.links { height: 46px; padding-right: 128px; text-align: right; font-size: 40px; line-height: 42px; }
.links a { color: #551a8b; text-decoration-thickness: 3px; }
form {
  width: 1548px;
  height: 718px;
  margin-left: 512px;
  padding: 151px 0 0 153px;
  border: 6px solid;
  border-color: #eee #9a9a9a #9a9a9a #eee;
  display: flex;
  flex-direction: column;
}
label { display: grid; grid-template-columns: 688px 496px; height: 61px; margin-bottom: 43px; font-size: 40px; line-height: 65px; }
label.email { grid-template-columns: 687px 495px; }
label.contact { grid-template-columns: 685px 496px; }
input {
  width: 100%;
  height: 61px;
  border: 1px solid #ecebd8;
  border-bottom: 2px solid #c2c2ba;
  border-radius: 0;
  background: #fff;
  padding: 4px 5px 0;
  font: 39.5px Inter, sans-serif;
  letter-spacing: -0.4px;
  color: #000;
  outline: 0;
}
.name input { letter-spacing: -0.8px; }
.email input { letter-spacing: -1.4px; padding-left: 4px; }
.contact input { letter-spacing: 0.2px; padding-left: 4px; }
button {
  width: 219px;
  height: 60px;
  margin: 2px 0 0 555px;
  padding: 0 2px 2px 0;
  border: 4px solid;
  border-color: #fff #6c6c6c #6c6c6c #fff;
  border-radius: 30px;
  background: #b5c9d1;
  color: #c85f8f;
  font: 36px/50px Inter, sans-serif;
  letter-spacing: -0.8px;
}

/* Dock */
.dock {
  position: relative;
  flex: none;
  width: 2244px;
  height: 98px;
  margin: 2px 0 0 158px;
  padding: 0 4px;
  display: flex;
  border: 2px solid rgba(255, 255, 255, .18);
  border-radius: 28px;
  background: linear-gradient(90deg, #251856 0, #2b164c 220px, #3f1440 420px, #4b1526 600px, #3d1617 800px, #381516 1500px, #2e1518 1780px, #1e181d 1980px, #15223a 2140px, #132b52 2240px);
  box-shadow: 0 0 64px rgba(0, 0, 0, .24);
}
.app { position: relative; width: 80px; padding: 13px 9px 0; flex: none; }
.app > svg { width: 62px; height: 62px; filter: drop-shadow(0 1px 1px rgba(0, 0, 0, .3)); }
.petals { isolation: isolate; }
.petals ellipse { mix-blend-mode: multiply; opacity: .92; }
.run::after { content: ""; display: block; width: 8px; height: 8px; margin: 9px auto 0; border-radius: 50%; background: #b59ac4; }
.run:nth-child(n+18)::after { background: #a99396; }
.divider { width: 2px; height: 70px; margin: 12px 17px 0; background: rgba(255, 255, 255, .27); flex: none; }
.badge { position: absolute; top: 6px; right: 2px; width: 28px; height: 28px; border-radius: 50%; background: #ee3b38; color: #fff; font-size: 17px; font-weight: 500; line-height: 28px; text-align: center; }
.zoom-logo { font-family: "Open Sans", sans-serif; font-weight: 600; }
```
